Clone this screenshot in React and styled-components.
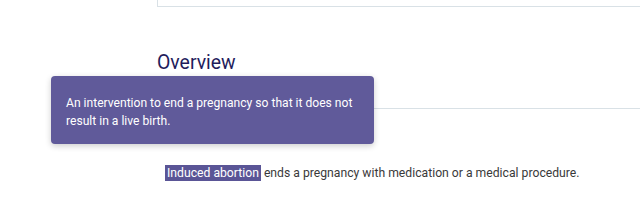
import styled, { createGlobalStyle } from "styled-components";

const GlobalStyle = createGlobalStyle`
  body {
    margin: 0;
    background: #ffffff;
    font-family: Roboto, "Liberation Sans", sans-serif;
  }
`;

const Page = styled.div`
  position: relative;
  width: 640px;
  height: 205px;
  overflow: hidden;
`;

const Column = styled.div`
  margin-left: 157px;
  display: flex;
  flex-direction: column;
`;

const TopCard = styled.div`
  height: 6px;
  border-left: 1px solid #d9e1e6;
  border-bottom: 1px solid #d9e1e6;
`;

const Section = styled.section`
  padding-top: 44px;
  border-bottom: 1px solid #d9e1e6;
  height: 57px;
`;

const Heading = styled.h2`
  margin: 0;
  font-size: 19.4px;
  font-weight: 400;
  line-height: 24px;
  color: #1f1c5c;
`;

const Paragraph = styled.p`
  margin: 56px 0 0 8px;
  font-size: 12.2px;
  line-height: 16px;
  color: #3a3a3a;
`;

const Term = styled.span`
  background: #5a5596;
  color: #ffffff;
  padding: 1px 2px;
`;

const Tooltip = styled.div`
  position: absolute;
  left: 51px;
  top: 76px;
  width: 323px;
  box-sizing: border-box;
  padding: 18px 12px 14px 15px;
  background: #605a9a;
  color: #ffffff;
  border-radius: 4px;
  box-shadow: 0 2px 6px rgba(0, 0, 0, 0.2);
  font-size: 12.1px;
  line-height: 18px;
`;

export default function App() {
  return (
    <Page>
      <GlobalStyle />
      <Column>
        <TopCard />
        <Section>
          <Heading>Overview</Heading>
        </Section>
        <Paragraph>
          <Term>Induced abortion</Term> ends a pregnancy with medication or a medical procedure.
        </Paragraph>
      </Column>
      <Tooltip>
        An intervention to end a pregnancy so that it does not result in a live birth.
      </Tooltip>
    </Page>
  );
}
